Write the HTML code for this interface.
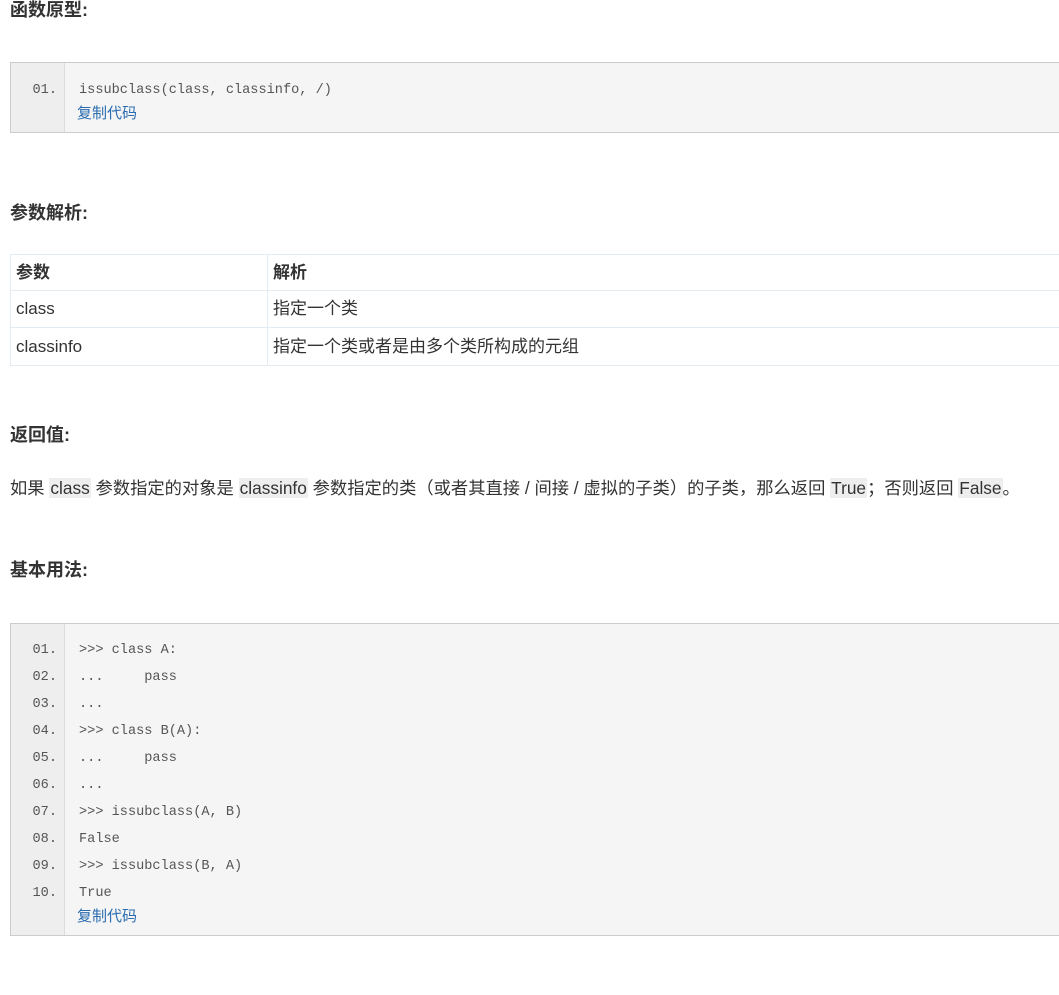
<!DOCTYPE html>
<html><head><meta charset="utf-8"><style>
body{margin:0;width:1059px;height:995px;background:#fff;position:relative;overflow:hidden;font-family:"Liberation Sans","Noto Sans CJK SC",sans-serif;color:#333}
h3{position:absolute;margin:0;left:10px;font-size:18px;font-weight:bold;line-height:24px;color:#333}
.box{position:absolute;left:10px;width:1060px;border:1px solid #ccc;background:#f5f5f5;box-sizing:border-box}
.gut{position:absolute;left:0;top:0;bottom:0;width:53px;background:#eee;border-right:1px solid #ddd}
.ln{position:absolute;font-family:"Liberation Mono",monospace;font-size:13.6px;line-height:20px;color:#555}
.num{left:0;width:46px;text-align:right}
.code{left:68px}
.cp{position:absolute;left:66px;font-size:15px;line-height:20px;color:#2a6cb0}
.t{position:absolute;left:10px;width:1060px;height:37px;border:1px solid #e3ecf3;box-sizing:border-box;font-size:17px;line-height:35px}
.t div{position:absolute;top:0;height:35px;padding-left:5px;white-space:nowrap}
.t .c2{left:256px;border-left:1px solid #e3ecf3;padding-left:5px}
.t b{font-weight:bold}
p{position:absolute;margin:0;left:10px;top:476px;font-size:17.3px;line-height:24px;white-space:nowrap;color:#333}
code{background:#eee;font-family:inherit;padding:0 1px}
</style></head><body>
<h3 style="top:-2px">函数原型:</h3>
<div class="box" style="top:62px;height:71px">
<div class="gut"></div>
<div class="ln num" style="top:18px">01.</div>
<div class="ln code" style="top:18px">issubclass(class, classinfo, /)</div>
<div class="cp" style="top:41px">复制代码</div>
</div>
<h3 style="top:201px">参数解析:</h3>
<div class="t" style="top:254px"><div><b>参数</b></div><div class="c2"><b>解析</b></div></div>
<div class="t" style="top:291px;border-top:none;height:37px;line-height:36px"><div style="height:36px">class</div><div class="c2" style="height:36px">指定一个类</div></div>
<div class="t" style="top:328px;border-top:none;height:38px;line-height:37px"><div style="height:37px">classinfo</div><div class="c2" style="height:37px">指定一个类或者是由多个类所构成的元组</div></div>
<h3 style="top:423px">返回值:</h3>
<p>如果 <code>class</code> 参数指定的对象是 <code>classinfo</code> 参数指定的类（或者其直接 / 间接 / 虚拟的子类）的子类，那么返回 <code>True</code>；否则返回 <code>False</code>。</p>
<h3 style="top:558px">基本用法:</h3>
<div class="box" style="top:623px;height:313px">
<div class="gut"></div>
<div class="ln num" style="top:13px;line-height:27px">01.<br>02.<br>03.<br>04.<br>05.<br>06.<br>07.<br>08.<br>09.<br>10.</div>
<div class="ln code" style="top:13px;line-height:27px;white-space:pre">&gt;&gt;&gt; class A:
...     pass
...
&gt;&gt;&gt; class B(A):
...     pass
...
&gt;&gt;&gt; issubclass(A, B)
False
&gt;&gt;&gt; issubclass(B, A)
True</div>
<div class="cp" style="top:283px">复制代码</div>
</div>
</body></html>
